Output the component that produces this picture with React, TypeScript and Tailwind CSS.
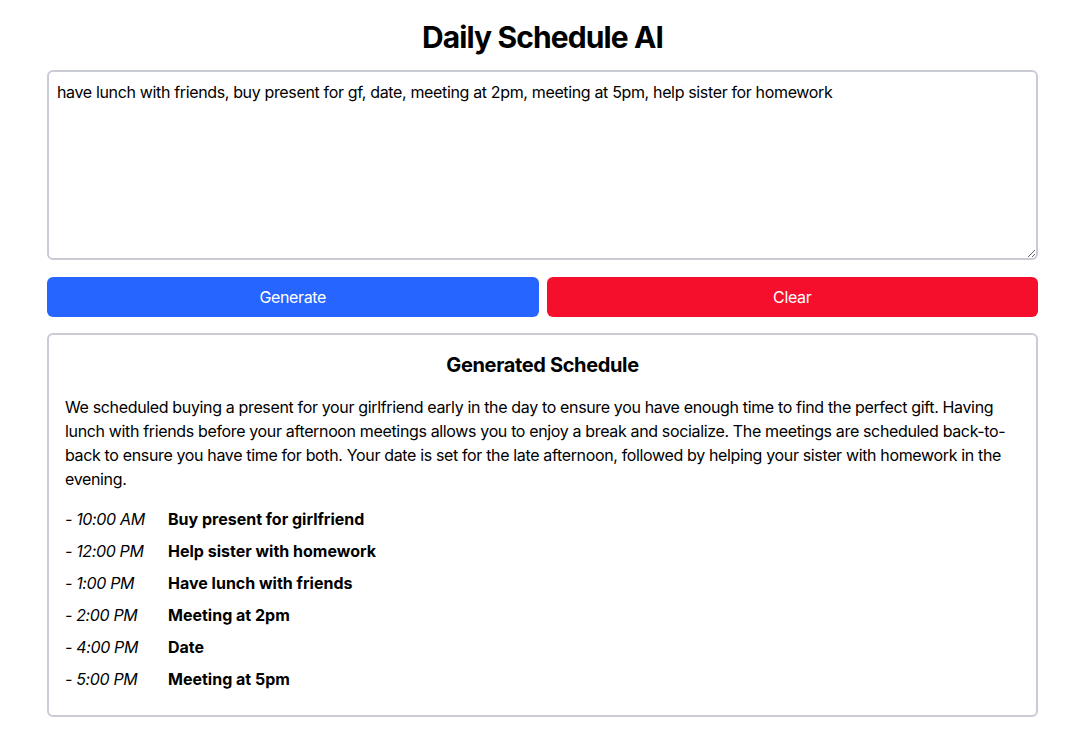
const schedule = [
  { time: "10:00 AM", task: "Buy present for girlfriend" },
  { time: "12:00 PM", task: "Help sister with homework" },
  { time: "1:00 PM", task: "Have lunch with friends" },
  { time: "2:00 PM", task: "Meeting at 2pm" },
  { time: "4:00 PM", task: "Date" },
  { time: "5:00 PM", task: "Meeting at 5pm" },
]

export default function App() {
  return (
    <main
      className="min-h-screen bg-white text-black pl-[47px] pr-[39px] pt-[18px] tracking-[-0.022em]"
      style={{ fontFamily: "Inter, 'Noto Sans', sans-serif" }}
    >
      <h1 className="text-center text-[30px] leading-[38px] font-bold tracking-[-0.03em]">Daily Schedule AI</h1>
      <textarea
        className="mt-[14px] block w-full h-[190px] border-2 border-[#c9ccd5] rounded-md p-2 text-base leading-6 tracking-[-0.022em] outline-none"
        defaultValue="have lunch with friends, buy present for gf, date, meeting at 2pm, meeting at 5pm, help sister for homework"
      />
      <div className="mt-[17px] flex gap-2">
        <button className="flex-1 h-10 rounded-md bg-[#2665ff] text-white text-base tracking-[-0.022em]">Generate</button>
        <button className="flex-1 h-10 rounded-md bg-[#f50f2d] text-white text-base tracking-[-0.022em]">Clear</button>
      </div>
      <section className="mt-4 border-2 border-[#c9ccd5] rounded-md pt-4 px-4 pb-5">
        <h2 className="text-center text-xl leading-7 font-bold">Generated Schedule</h2>
        <p className="mt-4 text-base leading-6">
          We scheduled buying a present for your girlfriend early in the day to ensure you have enough time to find the
          perfect gift. Having lunch with friends before your afternoon meetings allows you to enjoy a break and
          socialize. The meetings are scheduled back-to-back to ensure you have time for both. Your date is set for the
          late afternoon, followed by helping your sister with homework in the evening.
        </p>
        <ul className="mt-3">
          {schedule.map((s) => (
            <li key={s.time} className="flex py-1 text-base leading-6">
              <span className="italic w-[103px]">- {s.time}</span>
              <span className="font-bold tracking-normal">{s.task}</span>
            </li>
          ))}
        </ul>
      </section>
    </main>
  )
}
